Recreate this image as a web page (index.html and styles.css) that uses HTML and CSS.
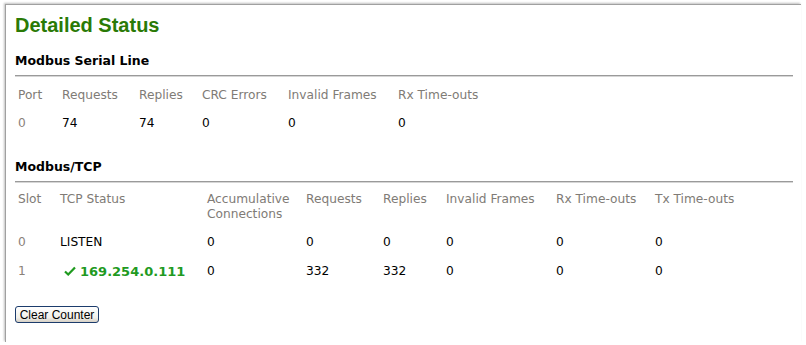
FILE: index.html
```html
<!DOCTYPE html>
<html lang="en">
<head>
    <meta charset="UTF-8">
    <title>Detailed Status</title>
    <link rel="stylesheet" href="styles.css">
</head>
<body>
<div class="frame">
    <h1>Detailed Status</h1>

    <h2>Modbus Serial Line</h2>
    <table class="stats serial">
        <colgroup>
            <col style="width:44px"><col style="width:77px"><col style="width:63px">
            <col style="width:86px"><col style="width:110px"><col>
        </colgroup>
        <tr class="head">
            <th>Port</th><th>Requests</th><th>Replies</th><th>CRC Errors</th><th>Invalid Frames</th><th>Rx Time-outs</th>
        </tr>
        <tr>
            <td class="idx">0</td><td>74</td><td>74</td><td>0</td><td>0</td><td>0</td>
        </tr>
    </table>

    <h2>Modbus/TCP</h2>
    <table class="stats tcp">
        <colgroup>
            <col style="width:42px"><col style="width:147px"><col style="width:99px"><col style="width:77px">
            <col style="width:63px"><col style="width:110px"><col style="width:99px"><col>
        </colgroup>
        <tr class="head">
            <th>Slot</th><th>TCP Status</th><th>Accumulative<br>Connections</th><th>Requests</th>
            <th>Replies</th><th>Invalid Frames</th><th>Rx Time-outs</th><th>Tx Time-outs</th>
        </tr>
        <tr>
            <td class="idx">0</td><td>LISTEN</td><td>0</td><td>0</td><td>0</td><td>0</td><td>0</td><td>0</td>
        </tr>
        <tr>
            <td class="idx">1</td>
            <td class="online">
                <svg class="check" width="12" height="10" viewBox="0 0 12 10"><path d="M1 5.5 L4.2 8.5 L11 1.5" fill="none" stroke="#1f9a1f" stroke-width="2.2"/></svg>169.254.0.111
            </td>
            <td>0</td><td>332</td><td>332</td><td>0</td><td>0</td><td>0</td>
        </tr>
    </table>

    <button type="button" class="btn">Clear Counter</button>
</div>
</body>
</html>
```

FILE: styles.css
```css
* { margin: 0; padding: 0; box-sizing: border-box; }
body {
    background: #fff;
    font-family: "DejaVu Sans", Verdana, sans-serif;
    font-size: 12.2px;
    color: #000;
}
/* sunken panel: shadow only on the top and left edges */
.frame {
    margin: 4px 0 0 5px;
    width: 796px;
    height: 338px;
    padding: 8px 8px 0 9px;
    border-top: 1px solid #a0a0a0;
    border-left: 1px solid #a0a0a0;
    box-shadow: -1px -1px 2px rgba(0,0,0,0.25);
}
h1 {
    font-family: "Liberation Sans", Arial, sans-serif;
    font-size: 20px;
    line-height: 24px;
    color: #2a7a06;
    font-weight: bold;
    margin-bottom: 16px;
}
h2 {
    font-size: 12.5px;
    font-weight: bold;
    line-height: 16px;
    padding-bottom: 6px;
    border-bottom: 1px solid #9a9a9a;
    box-shadow: 0 1px 0 #d6d6d6;
}
.stats {
    border-collapse: collapse;
    table-layout: fixed;
    width: 500px;
    margin: 8px 0 20px;
}
.stats.tcp { width: 760px; margin: 6px 0 19px; }
.stats th, .stats td {
    text-align: left;
    vertical-align: top;
    padding: 4px 3px;
    line-height: 15px;
    white-space: nowrap;
}
.stats th { font-weight: normal; color: #807b76; }
.stats tr.head th { padding-bottom: 7px; }
.stats td { padding-top: 6px; padding-bottom: 8px; }
.stats td.idx { color: #8a8178; }
.online {
    color: #1f9a1f;
    font-weight: bold;
    font-size: 13px;
}
.check { margin: 0 4px 0 4px; vertical-align: 0; }
.btn {
    font-family: "Liberation Sans", Tahoma, sans-serif;
    font-size: 12px;
    width: 84px;
    height: 17px;
    line-height: 14px;
    border: 1px solid #1c3c6c;
    border-radius: 3px;
    background: linear-gradient(#ffffff, #f1f0ea 70%, #d6d0c5);
    color: #000;
}
```
